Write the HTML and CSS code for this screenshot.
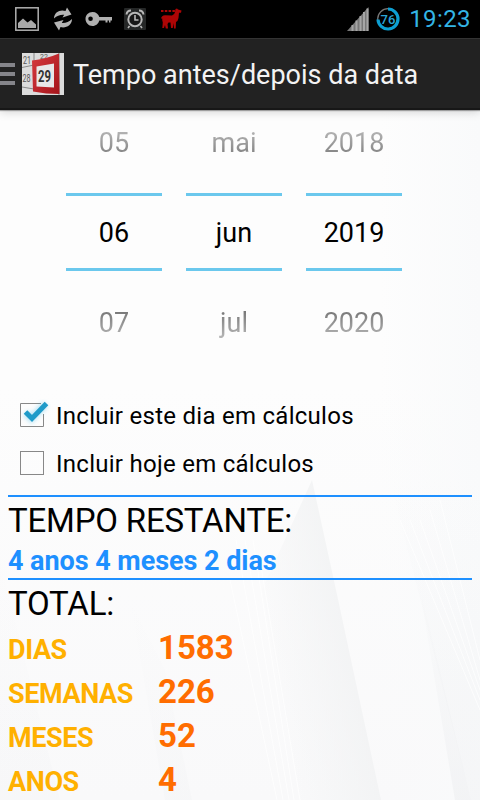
FILE: index.html
```html
<!DOCTYPE html>
<html lang="pt">
<head>
  <meta charset="UTF-8" />
  <meta name="viewport" content="width=device-width, initial-scale=1.0" />
  <title>Tempo antes/depois da data</title>
  <link rel="stylesheet" href="styles.css">
</head>
<body>
  <!-- pale folded backdrop -->
  <svg class="backdrop" width="480" height="690" viewBox="0 110 480 690">
    <defs>
      <linearGradient id="fold" x1="0" y1="0" x2="0" y2="1">
        <stop offset="0" stop-color="#eeeff1" stop-opacity="0" />
        <stop offset="1" stop-color="#eeeff1" />
      </linearGradient>
      <linearGradient id="main-fold" gradientUnits="userSpaceOnUse" x1="260" y1="640" x2="345" y2="622">
        <stop offset="0" stop-color="#f1f2f3" stop-opacity="0" />
        <stop offset="1" stop-color="#f1f2f3" />
      </linearGradient>
      <linearGradient id="side" x1="0" y1="0" x2="1" y2="0">
        <stop offset="0" stop-color="#f9fafb" stop-opacity="0" />
        <stop offset="1" stop-color="#f9fafb" />
      </linearGradient>
      <linearGradient id="base" x1="0" y1="0" x2="0" y2="1">
        <stop offset=".4" stop-color="#f9f9fa" stop-opacity="0" />
        <stop offset="1" stop-color="#f9f9fa" />
      </linearGradient>
    </defs>
    <rect x="0" y="110" width="480" height="690" fill="url(#base)" />
    <rect x="380" y="110" width="100" height="690" fill="url(#side)" />
    <path d="M312 480 L336 590 L381 800 L300 800 L262 590 Z" fill="url(#main-fold)" opacity=".8" />
    <path d="M390 480 L480 480 L480 800 L471 800 Z" fill="url(#fold)" opacity=".4" />
    <path d="M418 580 L471 800 L455 800 Z" fill="url(#fold)" opacity=".6" />
    <path d="M0 560 L60 800 L0 800 Z" fill="url(#fold)" opacity=".2" />
    <path d="M130 600 L165 670 L192 800 L165 800 Z" fill="url(#fold)" opacity=".25" />
    <path class="rays" d="M236 540 L283 800 M245 540 L289 800 M253 540 L294 800 M260 560 L300 800 M230 580 L277 800 M400 520 L480 710 M410 520 L480 700 M420 520 L480 690 M430 510 L480 680 M440 500 L480 660" />
  </svg>

  <div class="status-bar">
    <div class="notifications">
      <svg width="24" height="24" viewBox="0 0 24 24">
        <rect x=".8" y=".8" width="22.4" height="22.4" fill="none" stroke="#b0b0b0" stroke-width="1.5" />
        <path d="M3 21 V16 L8 11.500 L12.500 15.500 L16 13 L21 17.500 V21 Z" fill="#aaa" />
      </svg>
      <svg class="sync" width="20" height="24" viewBox="0 0 20 24">
        <path d="M1 11.500 C1 5 7.500 2 12.500 4 L14 0.500 L18.500 7.500 L9.500 10.500 L11.200 7.800 C7.500 7.500 4 8.500 1 11.500 Z" fill="#b4b4b4" />
        <path d="M19 12 C19 18.500 12.500 21.500 7.500 20 L6 23.500 L1 15.500 L10.500 13 L8.800 16 C12.500 16.300 16 15 19 12 Z" fill="#b4b4b4" />
      </svg>
      <svg width="28" height="16" viewBox="0 0 28 16">
        <path fill-rule="evenodd" d="M7.500 1 C11 1 13.500 3 14.300 6 H27 V9.500 H25.500 V11.500 H24 V9.500 H22.500 V11.500 H20.500 V9.500 H14.300 C13.500 12.500 11 15 7.500 15 C3.500 15 .5 11.500 .5 8 C.5 4 3.500 1 7.500 1 Z M5.500 5.500 A2.300 2.300 0 1 0 5.600 10.100 A2.300 2.300 0 0 0 5.500 5.500 Z" fill="#b0b0b0" />
      </svg>
      <svg class="alarm" width="22" height="22" viewBox="0 0 22 22">
        <rect width="22" height="22" rx="1" fill="#252727" />
        <circle cx="11" cy="11.500" r="6.700" fill="#181818" stroke="#b8b8b8" stroke-width="2" />
        <path d="M11 7 V12 H14.500 M5.500 18 L4 20 M16.500 18 L18 20" fill="none" stroke="#b8b8b8" stroke-width="1.600" />
        <path d="M2.500 6.500 Q3 2.500 7 2.500 M15 2.500 Q19 2.500 19.500 6.500" fill="none" stroke="#b8b8b8" stroke-width="2" />
      </svg>
      <svg class="llama" width="22" height="22" viewBox="0 0 22 22">
        <path d="M1 10.500 Q1.500 7.500 5 7.200 L12 7.500 Q14.500 7 15 4 L15.500 1 L17 .5 L18 1.500 L21.500 2.500 L21 4.800 H19 L18.500 10 Q18 13 16 14 L15.700 20.500 H14 L13.500 15 L12.800 20 H11 L10.500 14.500 H8.500 L7.500 16 L8 20.500 H5.800 L5 17 L4 20 H2.300 L2.800 14.500 Q2 12 2.200 10.500 Z" fill="#ad0505" />
        <path d="M1 3 H15" stroke="#ad0505" stroke-width="2.200" stroke-dasharray="2.500 1.300" />
      </svg>
    </div>
    <div class="system">
      <svg width="22" height="24" viewBox="0 0 22 24">
        <path d="M0 24 L21.500 0 V24 Z" fill="#777" />
        <path d="M5.500 24 V18 M9.500 24 V13.500 M13.500 24 V9 M17 24 V5 M20.500 24 V1.500" stroke="#a5a5a5" stroke-width="2" />
      </svg>
      <svg class="battery" width="24" height="24" viewBox="0 0 24 24">
        <circle cx="12" cy="12" r="10.300" fill="none" stroke="#777" stroke-width="1.200" />
        <path d="M12 2 A10 10 0 1 1 2 12.500" fill="none" stroke="#0c9fd3" stroke-width="3.200" />
        <text x="12" y="17" text-anchor="middle">76</text>
      </svg>
      <span class="clock">19:23</span>
    </div>
  </div>

  <div class="action-bar">
    <div class="drawer">
      <span></span>
      <span></span>
      <span></span>
    </div>
    <svg class="app-icon" width="42" height="42" viewBox="0 0 42 42">
      <defs>
        <linearGradient id="frame" x1="0" y1="0" x2="1" y2="1">
          <stop offset="0" stop-color="#d63a3e" />
          <stop offset="1" stop-color="#a5151b" />
        </linearGradient>
      </defs>
      <rect width="42" height="42" fill="#dcdcdc" />
      <path d="M0 14.500 L12 12 M0 34 L12 36 M37 0 V42 M12 0 V8" stroke="#888" stroke-width="1" />
      <text class="faded" x="1" y="11" textLength="8" lengthAdjust="spacingAndGlyphs">21</text>
      <text class="faded small" x="18" y="6">22</text>
      <text class="faded" x=".5" y="29" textLength="8" lengthAdjust="spacingAndGlyphs">28</text>
      <path d="M10 7.500 Q24 6 37 .5 L37.500 41 Q24 41 11 38.500 Z" fill="url(#frame)" />
      <path d="M14.500 13.500 L32 10.500 V34.500 L14.500 33.500 Z" fill="#e8e8e8" />
      <text class="day" x="16" y="29" textLength="13" lengthAdjust="spacingAndGlyphs">29</text>
    </svg>
    <h1>Tempo antes/depois da data</h1>
  </div>

  <div class="content">
    <div class="date-picker">
      <div class="wheel">
        <span class="prev">05</span>
        <span class="current">06</span>
        <span class="next">07</span>
      </div>
      <div class="wheel">
        <span class="prev">mai</span>
        <span class="current">jun</span>
        <span class="next">jul</span>
      </div>
      <div class="wheel">
        <span class="prev">2018</span>
        <span class="current">2019</span>
        <span class="next">2020</span>
      </div>
    </div>

    <div class="options">
      <div class="option">
        <svg width="32" height="32" viewBox="0 0 32 32">
          <path d="M22 4.500 H1.500 V27.500 H24.500 V15" fill="none" stroke="#888" />
          <path class="glow" d="M6.500 14 L12.500 19.500 L26.500 5" />
          <path class="tick" d="M6.500 13 L13 19.500 L27.500 4.500" />
        </svg>
        <span>Incluir este dia em cálculos</span>
      </div>
      <div class="option">
        <svg width="32" height="32" viewBox="0 0 32 32">
          <rect x="1.500" y="4.500" width="23" height="23" fill="none" stroke="#888" />
        </svg>
        <span>Incluir hoje em cálculos</span>
      </div>
    </div>

    <div class="remaining">
      <h2>TEMPO RESTANTE:</h2>
      <p>4 anos 4 meses 2 dias</p>
    </div>

    <div class="total">
      <h2>TOTAL:</h2>
      <div class="row"><span class="label">DIAS</span><span class="value">1583</span></div>
      <div class="row"><span class="label">SEMANAS</span><span class="value">226</span></div>
      <div class="row"><span class="label">MESES</span><span class="value">52</span></div>
      <div class="row"><span class="label">ANOS</span><span class="value">4</span></div>
    </div>
  </div>
</body>
</html>
```
FILE: styles.css
```css
body {
  margin: 0;
  position: relative;
  width: 480px;
  height: 800px;
  overflow: hidden;
  background: #fdfdfd;
  color: black;
  font-family: Roboto, sans-serif;
  font-size: 27px;
}

h1, h2, p {
  margin: 0;
  font-weight: 400;
}

svg {
  display: block;
  flex: none;
}

.backdrop {
  position: absolute;
  top: 110px;
  left: 0;
  z-index: -1;
}

.rays {
  fill: none;
  stroke: white;
  stroke-width: 1;
  opacity: .7;
}

/* status bar */
.status-bar {
  display: flex;
  justify-content: space-between;
  box-sizing: border-box;
  height: 38px;
  padding: 0 9px 0 15px;
  background: black;
}

.notifications, .system {
  display: flex;
  align-items: center;
}

.notifications {
  gap: 13px;
}

.notifications .sync {
  margin: 0 -1px 0 1px;
}

.notifications .alarm {
  margin-left: -2px;
}

.notifications .llama {
  margin-left: 1px;
}

.battery {
  margin-left: 7px;
}

.battery text {
  font-size: 13px;
  font-weight: 500;
  fill: #2ba5d6;
}

.clock {
  margin-left: 9px;
  font-size: 24px;
  line-height: 40px;
  letter-spacing: .4px;
  color: #33b5e5;
}

/* action bar */
.action-bar {
  position: relative;
  display: flex;
  align-items: center;
  box-sizing: border-box;
  height: 72px;
  background: #222;
  border-top: 1px solid #333;
  border-bottom: 2px solid #171717;
  box-shadow: 0 1px 1px rgba(0, 0, 0, .3), 0 2px 9px rgba(0, 0, 0, .17);
}

.drawer {
  display: flex;
  flex-direction: column;
  gap: 5px;
  width: 22px;
  padding-top: 1px;
}

.drawer span {
  width: 15px;
  height: 4px;
  background: #85858a;
}

.app-icon .faded {
  font-size: 11px;
  fill: #555;
}

.app-icon .small {
  font-size: 7px;
}

.app-icon .day {
  font-size: 16px;
  font-weight: 700;
  fill: #333;
}

h1 {
  padding-top: 3px;
  margin-left: 9px;
  font-size: 27px;
  line-height: 66px;
  color: #f3f3f3;
}

/* date wheels */
.date-picker {
  display: flex;
  gap: 24px;
  height: 282px;
  padding-left: 66px;
}

.wheel {
  display: flex;
  flex-direction: column;
  width: 96px;
  text-align: center;
}

.wheel span {
  line-height: 66px;
}

.wheel .prev, .wheel .next {
  color: transparent;
  background-clip: text;
  -webkit-background-clip: text;
}

.wheel .prev {
  height: 83px;
  background-image: linear-gradient(#ccc 10px, #777 50px);
}

.wheel .current {
  height: 72px;
  line-height: 74px;
  border-top: 3px solid #6bc8ed;
  border-bottom: 3px solid #6bc8ed;
}

.wheel .next {
  line-height: 104px;
  background-image: linear-gradient(#777 40px, #ccc 76px);
}

/* checkboxes */
.option {
  display: flex;
  align-items: center;
  height: 48px;
  padding-left: 19px;
  font-size: 24px;
  letter-spacing: .27px;
}

.option svg {
  margin-top: -2px;
}

.option span {
  margin-left: 5px;
}

.glow {
  fill: none;
  stroke: #33b5e5;
  stroke-width: 7;
  opacity: .35;
  filter: blur(2px);
}

.tick {
  fill: none;
  stroke: #1f9bc9;
  stroke-width: 5;
}

/* results */
.remaining {
  margin: 7px 8px 0;
  border-top: 2px solid #1e90ff;
  border-bottom: 2px solid #1e90ff;
}

h2 {
  font-size: 33px;
  line-height: 48px;
  letter-spacing: -.2px;
}

.remaining p {
  height: 33px;
  line-height: 32px;
  font-weight: 700;
  letter-spacing: -.05px;
  color: #1e90ff;
}

.total {
  padding: 0 8px;
}

.row {
  display: flex;
  align-items: baseline;
  height: 44px;
  line-height: 40px;
  font-weight: 700;
}

.label {
  width: 150px;
  letter-spacing: -.4px;
  color: #ffb000;
}

.value {
  font-size: 33px;
  color: #ff6d00;
}
```
